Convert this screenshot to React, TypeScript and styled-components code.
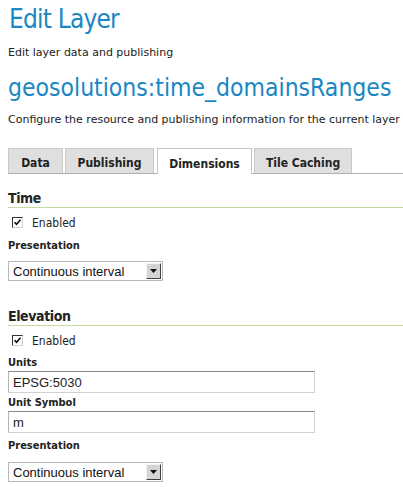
import React from "react";
import styled, { createGlobalStyle } from "styled-components";

const Global = createGlobalStyle`
  html, body { margin: 0; padding: 0; background: #fff; }
  body { font-family: "DejaVu Sans Condensed", "DejaVu Sans", sans-serif; color: #222; }
`;

const Page = styled.div`
  padding: 0 0 0 8px;
  display: flex;
  flex-direction: column;
`;

const Title = styled.h1`
  margin: 4px 0 0 1px;
  font-weight: normal;
  font-size: 26px;
  line-height: 30px;
  color: #1a87c3;
  letter-spacing: -0.8px;
`;

const Sub = styled.p<{ $top: number }>`
  margin: ${(p) => p.$top}px 0 0 0;
  font-family: "DejaVu Sans", sans-serif;
  font-size: 11px;
  line-height: 14px;
  color: #222;
  white-space: nowrap;
`;

const LayerName = styled.h2`
  margin: 13px 0 0 0;
  font-weight: normal;
  font-size: 24.5px;
  line-height: 30px;
  color: #1a87c3;
  white-space: nowrap;
`;

const Tabs = styled.div`
  display: flex;
  align-items: flex-start;
  margin-top: 21px;
  border-bottom: 1px solid #b0b0b0;
  height: 25px;
`;

const Tab = styled.div<{ $active?: boolean; $w: number; $gap: number }>`
  width: ${(p) => p.$w}px;
  margin-right: ${(p) => p.$gap}px;
  box-sizing: border-box;
  display: flex;
  align-items: center;
  justify-content: center;
  font-weight: bold;
  font-size: 12px;
  color: #222;
  background: ${(p) => (p.$active ? "#fff" : "#dfdfdf")};
  border: 1px solid ${(p) => (p.$active ? "#c4c4c4" : "#cacaca")};
  border-bottom: none;
  height: ${(p) => (p.$active ? 26 : 25)}px;
  padding-top: 4px;
`;

const SectionTitle = styled.h3<{ $top: number }>`
  margin: ${(p) => p.$top}px 0 0 0;
  font-size: 14px;
  line-height: 17px;
  font-weight: bold;
  letter-spacing: -0.4px;
  color: #222;
  border-bottom: 1px solid #c3dc9f;
`;

const CheckRow = styled.label`
  display: flex;
  align-items: flex-start;
  gap: 9px;
  margin: 8px 0 0 4px;
  font-size: 12px;
  line-height: 14px;
  color: #222;
`;

const Box = styled.span`
  width: 11px;
  height: 11px;
  margin-top: 1px;
  box-sizing: border-box;
  border: 1px solid #333;
  border-right-color: #d0d0d0;
  border-bottom-color: #d0d0d0;
  background: #fff;
  display: flex;
  align-items: center;
  justify-content: center;
`;

const FieldLabel = styled.div<{ $top: number }>`
  margin-top: ${(p) => p.$top}px;
  font-size: 11px;
  line-height: 13px;
  font-weight: bold;
  color: #222;
`;

const Select = styled.div<{ $top: number }>`
  margin-top: ${(p) => p.$top}px;
  width: 155px;
  height: 20px;
  box-sizing: border-box;
  border: 1px solid #b8b8b8;
  display: flex;
  align-items: stretch;
  font-family: "Liberation Sans", Arial, sans-serif;
  font-size: 13px;
  color: #111;
`;

const SelectText = styled.span`
  flex: 1;
  padding-left: 4px;
  display: flex;
  align-items: center;
`;

const Arrow = styled.span`
  width: 15px;
  margin: 1px 1px 1px 0;
  box-sizing: border-box;
  background: #d4d4d4;
  border: 1px solid;
  border-color: #f4f4f4 #404040 #404040 #f4f4f4;
  display: flex;
  align-items: center;
  justify-content: center;
`;

const Input = styled.div<{ $top: number }>`
  margin-top: ${(p) => p.$top}px;
  width: 307px;
  height: 22px;
  box-sizing: border-box;
  border: 1px solid #d2d2d2;
  border-top-color: #8a8a8a;
  border-left-color: #b4b4b4;
  font-family: "Liberation Sans", Arial, sans-serif;
  font-size: 13px;
  color: #222;
  display: flex;
  align-items: center;
  padding-left: 4px;
`;

const Check = () => (
  <Box>
    <svg width="9" height="9" viewBox="0 0 9 9">
      <path d="M1.5 4.2 L3.5 6.3 L7.5 1.8" stroke="#111" strokeWidth="1.6" fill="none" />
    </svg>
  </Box>
);

const DropDown = ({ top }: { top: number }) => (
  <Select $top={top}>
    <SelectText>Continuous interval</SelectText>
    <Arrow>
      <svg width="7" height="4" viewBox="0 0 7 4">
        <path d="M0 0 H7 L3.5 4 Z" fill="#111" />
      </svg>
    </Arrow>
  </Select>
);

export default function App() {
  return (
    <Page>
      <Global />
      <Title>Edit Layer</Title>
      <Sub $top={12}>Edit layer data and publishing</Sub>
      <LayerName>geosolutions:time_domainsRanges</LayerName>
      <Sub $top={10}>Configure the resource and publishing information for the current layer</Sub>
      <Tabs>
        <Tab $w={55} $gap={2}>Data</Tab>
        <Tab $w={89} $gap={3}>Publishing</Tab>
        <Tab $w={95} $gap={2} $active>Dimensions</Tab>
        <Tab $w={98} $gap={0}>Tile Caching</Tab>
      </Tabs>
      <SectionTitle $top={16}>Time</SectionTitle>
      <CheckRow>
        <Check />
        Enabled
      </CheckRow>
      <FieldLabel $top={9}>Presentation</FieldLabel>
      <DropDown top={9} />
      <SectionTitle $top={27}>Elevation</SectionTitle>
      <CheckRow>
        <Check />
        Enabled
      </CheckRow>
      <FieldLabel $top={8}>Units</FieldLabel>
      <Input $top={2}>EPSG:5030</Input>
      <FieldLabel $top={3}>Unit Symbol</FieldLabel>
      <Input $top={2}>m</Input>
      <FieldLabel $top={6}>Presentation</FieldLabel>
      <DropDown top={10} />
    </Page>
  );
}
